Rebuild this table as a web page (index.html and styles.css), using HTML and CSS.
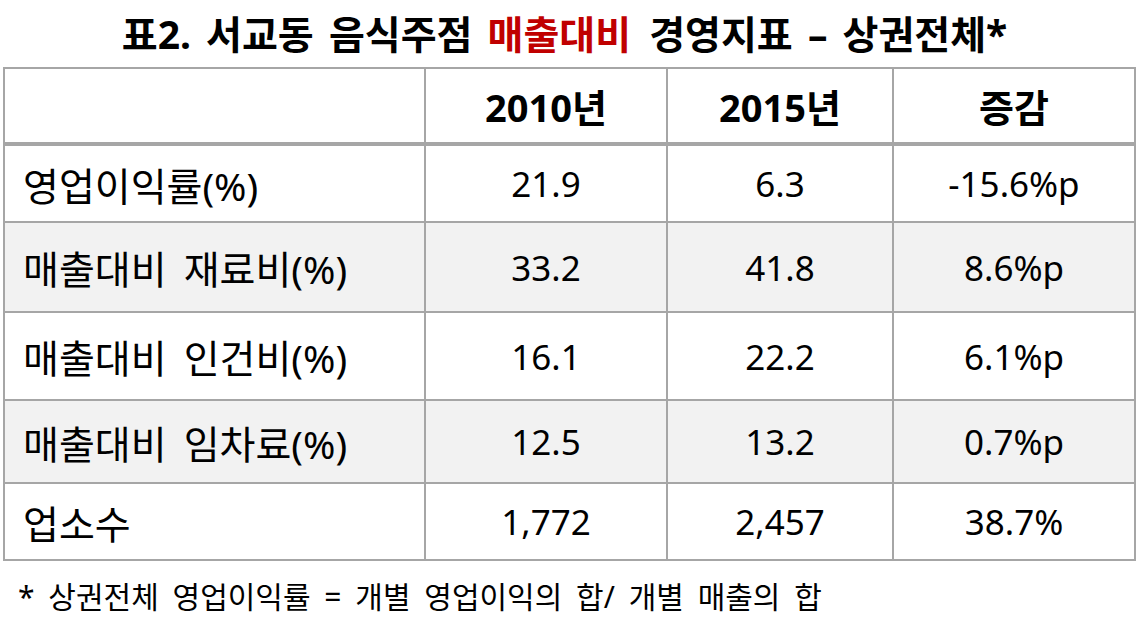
FILE: index.html
```html
<!DOCTYPE html>
<html lang="ko">
<head>
<meta charset="utf-8">
<title>표2. 서교동 음식주점 매출대비 경영지표</title>
<link rel="stylesheet" href="styles.css">
</head>
<body>
<div class="page">
  <h1 class="title">표2. 서교동 음식주점 <span class="accent">매출대비</span> 경영지표 – 상권전체*</h1>
  <table class="grid">
    <colgroup>
      <col class="c-label">
      <col class="c-y1">
      <col class="c-y2">
      <col class="c-diff">
    </colgroup>
    <thead>
      <tr class="r-head">
        <th></th>
        <th>2010년</th>
        <th>2015년</th>
        <th>증감</th>
      </tr>
    </thead>
    <tbody>
      <tr class="r1">
        <td class="label">영업이익률(%)</td>
        <td>21.9</td>
        <td>6.3</td>
        <td>-15.6%p</td>
      </tr>
      <tr class="r2 shade">
        <td class="label">매출대비 재료비(%)</td>
        <td>33.2</td>
        <td>41.8</td>
        <td>8.6%p</td>
      </tr>
      <tr class="r3">
        <td class="label">매출대비 인건비(%)</td>
        <td>16.1</td>
        <td>22.2</td>
        <td>6.1%p</td>
      </tr>
      <tr class="r4 shade">
        <td class="label">매출대비 임차료(%)</td>
        <td>12.5</td>
        <td>13.2</td>
        <td>0.7%p</td>
      </tr>
      <tr class="r5">
        <td class="label">업소수</td>
        <td>1,772</td>
        <td>2,457</td>
        <td>38.7%</td>
      </tr>
    </tbody>
  </table>
  <p class="note">* 상권전체 영업이익률 = 개별 영업이익의 합/ 개별 매출의 합</p>
</div>
</body>
</html>
```

FILE: styles.css
```css
html, body {
  margin: 0;
  padding: 0;
  background: #ffffff;
}

body {
  font-family: "Noto Sans", "Noto Sans CJK KR", sans-serif;
  color: #000000;
}

.page {
  width: 1137px;
  padding: 0 3px;
  box-sizing: border-box;
}

.title {
  margin: 0;
  height: 67px;
  display: flex;
  align-items: center;
  justify-content: center;
  font-size: 39px;
  font-weight: 700;
  word-spacing: 5px;
  padding: 0 8px 4px 0;
  box-sizing: border-box;
  white-space: pre;
}

.accent {
  color: #c00000;
  margin-right: 3px;
}

.grid {
  width: 1131px;
  border-collapse: collapse;
  table-layout: fixed;
  font-size: 35px;
}

.c-label { width: 421px; }
.c-y1 { width: 242px; }
.c-y2 { width: 226px; }
.c-diff { width: 242px; }

.grid th,
.grid td {
  border: 2px solid #a6a6a6;
  text-align: center;
  vertical-align: middle;
  padding: 0;
}

.grid th {
  font-size: 38px;
  font-weight: 700;
  border-bottom: 4px solid #a6a6a6;
}

.grid td.label {
  text-align: left;
  padding-left: 18px;
  font-size: 39px;
  word-spacing: 7px;
}

.shade td {
  background: #f2f2f2;
}

.r-head { height: 76px; }
.r1 { height: 78px; }
.r2 { height: 90px; }
.r3 { height: 88px; }
.r4 { height: 83px; }
.r5 { height: 77px; }

.note {
  margin: 12px 0 0 15px;
  font-size: 30px;
  word-spacing: 6px;
}
```
